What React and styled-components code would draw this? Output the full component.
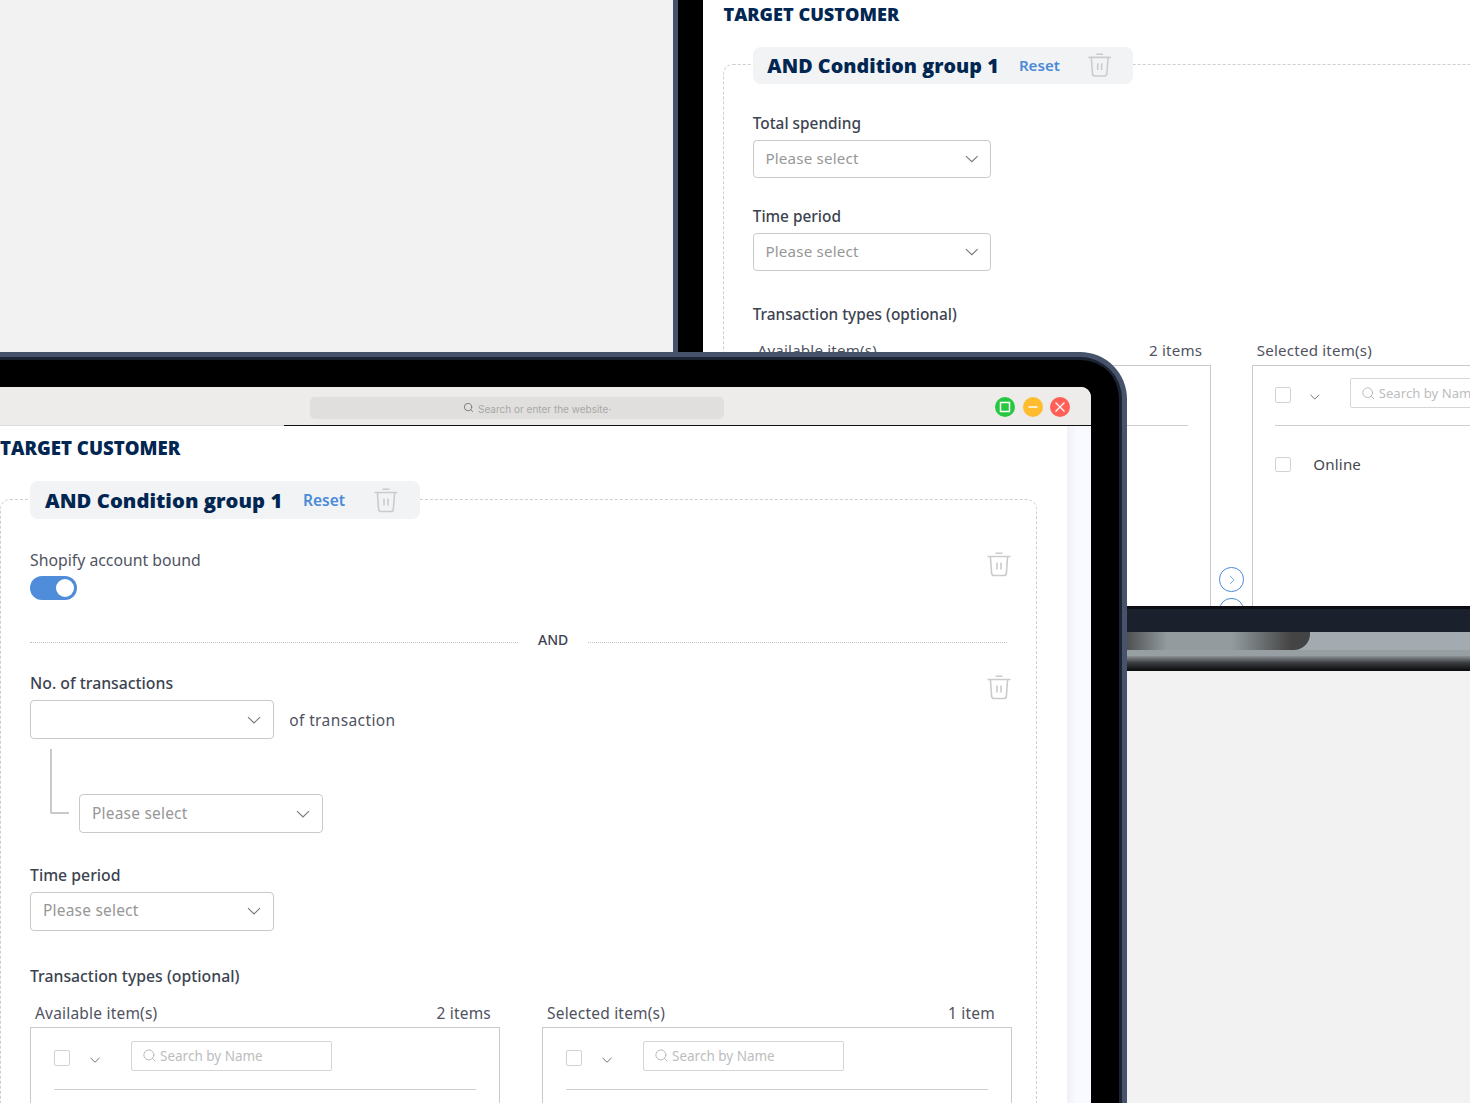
import React from "react";
import styled, { createGlobalStyle } from "styled-components";
import { Search } from "lucide-react";

const Global = createGlobalStyle`
  html, body { margin: 0; padding: 0; background: #f2f2f2; }
  * { box-sizing: border-box; }
`;

const Stage = styled.div`
  position: relative;
  width: 1470px;
  height: 1103px;
  overflow: hidden;
  background: #f2f2f2;
  font-family: "Noto Sans", "Open Sans", sans-serif;
`;

/* the two laptops sit on a free canvas, overlapping */
const BackLaptop = styled.div`
  position: absolute;
  left: 673px;
  top: 0;
  width: 1000px;
  display: flex;
  flex-direction: column;
`;

const BackBody = styled.div`
  height: 606px;
  display: flex;
  overflow: hidden;
  background: #fff;
  border-left: 5px solid #46536a;
`;

const BackBezel = styled.div`
  flex: 0 0 25px;
  background: #000;
`;

const BackContent = styled.div`
  flex: 1;
  min-width: 0;
  zoom: 0.975;
  padding: 4px 0 0 21px;
`;

const BaseNavy = styled.div`
  height: 26px;
  background: #1a202c;
  border-top: 3px solid #0b0d12;
`;

const BaseGrey = styled.div`
  height: 24px;
  background: linear-gradient(180deg, #a4abb0 0, #a4abb0 18px, #979fa3 18px);
`;

const Notch = styled.div`
  width: 270px;
  height: 18px;
  margin-left: 367px;
  border-radius: 0 0 16px 0;
  background: linear-gradient(90deg, #444 30%, #939b9f 47%, #939b9f 71%, #444 93%);
`;

const BaseLip = styled.div`
  height: 15px;
  background: linear-gradient(180deg, #8b9195 0, #3a3d40 45%, #0a0a0a 100%);
`;

const FrontLaptop = styled.div`
  position: absolute;
  left: -40px;
  top: 352px;
  width: 1167px;
  height: 800px;
  display: flex;
  padding: 30px 31px 0 0;
  background: #000;
  border: 5px solid #46536a;
  border-left: 0;
  border-top-right-radius: 47px;
  box-shadow: inset 0 3px 0 #1c2333, inset -3px 0 0 #1c2333;
`;

const Screen = styled.div`
  flex: 1;
  min-width: 0;
  display: flex;
  flex-direction: column;
  background: #fff;
  border-top-right-radius: 10px;
  overflow: hidden;
`;

const BrowserBar = styled.div`
  position: relative;
  height: 39px;
  flex: none;
  display: flex;
  align-items: flex-start;
  padding: 10px 21px 0 350px;
  background: #edecea;
  border-bottom: 1px solid #dcdcdc;
  &::after {
    content: "";
    position: absolute;
    left: 324px;
    right: 0;
    bottom: -1px;
    height: 1.5px;
    background: #111;
  }
`;

const AddressBar = styled.div`
  width: 414px;
  height: 22px;
  display: flex;
  align-items: center;
  gap: 4px;
  padding: 2px 0 0 153px;
  border-radius: 5px;
  background: #e0dfdd;
  color: #a8a8a8;
  font-family: "Inter", sans-serif;
  font-size: 10px;
  svg { color: #777; margin-top: -3px; }
`;

const WindowButtons = styled.div`
  display: flex;
  gap: 7.5px;
  margin-left: auto;
`;

const WindowButton = styled.div`
  width: 20px;
  height: 20px;
  border-radius: 50%;
  background: ${(p) => p.$color};
  display: flex;
  align-items: center;
  justify-content: center;
`;

const ScreenBody = styled.div`
  flex: 1;
  display: flex;
  min-height: 0;
`;

const FrontContent = styled.div`
  flex: 1;
  min-width: 0;
  padding: 11px 30px 0 40px;
`;

const SideStrip = styled.div`
  width: 24px;
  background: linear-gradient(90deg, #f1f2f6 0, #f9faff 10px);
`;

const PageTitle = styled.div`
  font-family: "Open Sans", sans-serif;
  font-size: 18.6px;
  font-weight: 800;
  line-height: 22px;
  color: #012652;
`;

const Card = styled.div`
  width: 1037px;
  margin-top: 40px;
  padding: 0 25px 40px 29px;
  border: 1px dashed #cfcfcf;
  border-radius: 10px;
`;

const CardHead = styled.div`
  width: 390px;
  height: 38px;
  margin-top: -19px;
  padding-left: 15px;
  display: flex;
  align-items: center;
  background: #f2f3f4;
  border-radius: 8px;
`;

const GroupName = styled.div`
  flex: 0 0 258px;
  font-family: "Open Sans", sans-serif;
  font-size: 20.2px;
  font-weight: 800;
  letter-spacing: 0.05px;
  color: #012652;
`;

const ResetLink = styled.div`
  flex: 0 0 71px;
  font-size: 15.5px;
  font-weight: 600;
  color: #4a8ad9;
`;

const Label = styled.div`
  margin-top: ${(p) => p.$top || 0}px;
  font-size: 15.8px;
  line-height: 22px;
  font-weight: ${(p) => (p.$strong ? 500 : 400)};
  color: ${(p) => (p.$strong ? "#3c4350" : "#50535f")};
`;

const FieldRow = styled.div`
  display: flex;
  justify-content: space-between;
  align-items: flex-start;
  margin-top: ${(p) => p.$top || 0}px;
`;

const TrashSlot = styled.div`
  padding-top: 3px;
  display: flex;
`;

const Toggle = styled.div`
  width: 47px;
  height: 24px;
  margin-top: 5px;
  padding: 3px;
  display: flex;
  justify-content: flex-end;
  border-radius: 12px;
  background: #4f8ddb;
  &::after {
    content: "";
    width: 18px;
    height: 18px;
    border-radius: 50%;
    background: #fff;
  }
`;

const AndRow = styled.div`
  display: flex;
  align-items: center;
  gap: 20px;
  margin-top: 29px;
  font-size: 14px;
  font-weight: 500;
  line-height: 22px;
  color: #3c4350;
  &::before, &::after {
    content: "";
    height: 0;
    margin-top: 4px;
    border-top: 1px dotted #c4c4c4;
  }
  &::before { flex: 0 0 488px; }
  &::after { flex: 0 0 419px; }
`;

const SelectRow = styled.div`
  display: flex;
  align-items: center;
  gap: 15px;
  margin-top: ${(p) => p.$top ?? 5.5}px;
  font-size: 15.5px;
  color: #50535f;
  letter-spacing: 0.4px;
`;

const SelectBox = styled.div`
  width: 244.2px;
  height: 39px;
  flex: none;
  padding: 0 11px 0 12px;
  display: flex;
  align-items: center;
  justify-content: space-between;
  border: 1px solid #c9c9c9;
  border-radius: 4px;
  background: #fff;
  font-size: 15.5px;
  color: #979797;
  letter-spacing: 0.2px;
`;

const SelectValue = styled.span`
  padding-bottom: 2px;
`;

const SelectArrow = styled.span`
  display: flex;
  color: #777;
`;

const TreeRow = styled.div`
  display: flex;
  align-items: flex-end;
  gap: 10px;
  margin-top: 10px;
  padding-left: 20px;
`;

const TreeCorner = styled.div`
  width: 19px;
  height: 65px;
  margin-bottom: 19px;
  border-left: 2px solid #c9c9c9;
  border-bottom: 2px solid #c9c9c9;
  border-bottom-left-radius: 2px;
`;

const Lists = styled.div`
  display: flex;
  margin-top: 15px;
  width: 981px;
`;

const ListColumn = styled.div`
  flex: 0 0 470px;
`;

const ListTitle = styled.div`
  display: flex;
  justify-content: space-between;
  padding: 0 ${(p) => p.$inset}px 0 5px;
  font-size: 15.5px;
  line-height: 22px;
  color: #50535f;
  letter-spacing: 0.2px;
`;

const ListBox = styled.div`
  height: 470px;
  margin-top: 3px;
  padding: 13px 23px 0;
  border: 1px solid #c9c9c9;
`;

const ListTools = styled.div`
  display: flex;
  align-items: flex-start;
  height: 49px;
  border-bottom: 1px solid #cfcfcf;
`;

const Check = styled.div`
  width: 16px;
  height: 16px;
  flex: none;
  border: 1px solid #d2d2d2;
  border-radius: 2px;
  margin-top: ${(p) => p.$top || 0}px;
`;

const ToolChevron = styled.div`
  flex: 0 0 61px;
  padding: 8px 0 0 19px;
  color: #555;
`;

const SearchBox = styled.div`
  width: 201px;
  height: 30px;
  padding-left: 10px;
  display: flex;
  align-items: center;
  gap: 3px;
  border: 1px solid #d6d6d6;
  border-radius: 2px;
  font-size: 13.5px;
  color: #bdbdbd;
  white-space: nowrap;
  svg { color: #b5b5b5; }
`;

const ListItem = styled.div`
  display: flex;
  align-items: center;
  gap: 23px;
  margin-top: 29px;
  font-size: 15.5px;
  letter-spacing: 0.15px;
  color: #44474f;
`;

const ArrowColumn = styled.div`
  flex: 0 0 42px;
  display: flex;
  flex-direction: column;
  align-items: center;
  gap: 6px;
  padding-top: 233px;
`;

const ArrowButton = styled.div`
  width: 25px;
  height: 25px;
  flex: none;
  display: flex;
  align-items: center;
  justify-content: center;
  border: 2px solid #4a8ad9;
  border-radius: 50%;
  color: #4a8ad9;
`;

const Chevron = ({ size = 16, dir = "down" }) => (
  <svg width={size} height={size} viewBox="0 0 16 16" fill="none" stroke="currentColor" strokeWidth="1.1">
    {dir === "down" && <path d="M2 5.2 8 11l6-5.8" />}
    {dir === "right" && <path d="M5.5 2.5 11 8l-5.5 5.5" />}
    {dir === "left" && <path d="M10.5 2.5 5 8l5.5 5.5" />}
  </svg>
);

const TrashIcon = () => (
  <svg width="24" height="25" viewBox="0 0 24 25" fill="none" stroke="#cbcbcb" strokeWidth="1.6">
    <path d="M0.5 4.5h23M8.5 1.2h7" />
    <path d="M3.4 4.5l1.2 16.6c.1 1.6 1 2.4 2.5 2.4h9.8c1.5 0 2.4-.8 2.5-2.4l1.2-16.6" />
    <path d="M10 10.5v7M14 10.5v7" />
  </svg>
);

const Select = ({ text }) => (
  <SelectBox>
    <SelectValue>{text}</SelectValue>
    <SelectArrow>
      <Chevron />
    </SelectArrow>
  </SelectBox>
);

const ItemList = ({ title, count, inset = 9, items = [] }) => (
  <ListColumn>
    <ListTitle $inset={inset}>
      <span>{title}</span>
      <span>{count}</span>
    </ListTitle>
    <ListBox>
      <ListTools>
        <Check $top={9} />
        <ToolChevron>
          <Chevron size={12} />
        </ToolChevron>
        <SearchBox>
          <Search size={15} strokeWidth={1.5} />
          Search by Name
        </SearchBox>
      </ListTools>
      {items.map((item) => (
        <ListItem key={item}>
          <Check />
          {item}
        </ListItem>
      ))}
    </ListBox>
  </ListColumn>
);

const TransactionLists = () => (
  <>
    <Label $strong $top={34}>Transaction types (optional)</Label>
    <Lists>
      <ItemList title="Available item(s)" count="2 items" />
      <ArrowColumn>
        <ArrowButton>
          <Chevron size={12} dir="right" />
        </ArrowButton>
        <ArrowButton>
          <Chevron size={12} dir="left" />
        </ArrowButton>
      </ArrowColumn>
      <ItemList title="Selected item(s)" count="1 item" inset={17} items={["Online"]} />
    </Lists>
  </>
);

const GroupHead = () => (
  <CardHead>
    <GroupName>AND Condition group 1</GroupName>
    <ResetLink>Reset</ResetLink>
    <TrashIcon />
  </CardHead>
);

const App = () => {
  return (
    <Stage>
      <Global />

      <BackLaptop>
        <BackBody>
          <BackBezel />
          <BackContent>
            <PageTitle>TARGET CUSTOMER</PageTitle>
            <Card>
              <GroupHead />
              <Label $strong $top={30}>Total spending</Label>
              <SelectRow>
                <Select text="Please select" />
              </SelectRow>
              <Label $strong $top={29}>Time period</Label>
              <SelectRow>
                <Select text="Please select" />
              </SelectRow>
              <TransactionLists />
            </Card>
          </BackContent>
        </BackBody>
        <BaseNavy />
        <BaseGrey>
          <Notch />
        </BaseGrey>
        <BaseLip />
      </BackLaptop>

      <FrontLaptop>
        <Screen>
          <BrowserBar>
            <AddressBar>
              <Search size={11} strokeWidth={2} />
              Search or enter the website·
            </AddressBar>
            <WindowButtons>
              <WindowButton $color="#27c840">
                <svg width="12" height="12" viewBox="0 0 12 12" fill="none" stroke="#fff" strokeWidth="1.5">
                  <rect x="1.5" y="1.5" width="9" height="9" />
                </svg>
              </WindowButton>
              <WindowButton $color="#febc2e">
                <svg width="12" height="12" viewBox="0 0 12 12" fill="none" stroke="#fff" strokeWidth="1.5">
                  <path d="M1.5 6h9" />
                </svg>
              </WindowButton>
              <WindowButton $color="#ff5f57">
                <svg width="12" height="12" viewBox="0 0 12 12" fill="none" stroke="#fff" strokeWidth="1.3">
                  <path d="M1.5 1.5l9 9M10.5 1.5l-9 9" />
                </svg>
              </WindowButton>
            </WindowButtons>
          </BrowserBar>
          <ScreenBody>
            <FrontContent>
              <PageTitle>TARGET CUSTOMER</PageTitle>
              <Card>
                <GroupHead />
                <FieldRow $top={30}>
                  <div>
                    <Label>Shopify account bound</Label>
                    <Toggle />
                  </div>
                  <TrashSlot>
                    <TrashIcon />
                  </TrashSlot>
                </FieldRow>
                <AndRow>AND</AndRow>
                <FieldRow $top={21}>
                  <Label $strong>No. of transactions</Label>
                  <TrashSlot>
                    <TrashIcon />
                  </TrashSlot>
                </FieldRow>
                <SelectRow $top={0}>
                  <Select text="" />
                  of transaction
                </SelectRow>
                <TreeRow>
                  <TreeCorner />
                  <Select text="Please select" />
                </TreeRow>
                <Label $strong $top={31}>Time period</Label>
                <SelectRow>
                  <Select text="Please select" />
                </SelectRow>
                <TransactionLists />
              </Card>
            </FrontContent>
            <SideStrip />
          </ScreenBody>
        </Screen>
      </FrontLaptop>
    </Stage>
  );
};

export default App;
